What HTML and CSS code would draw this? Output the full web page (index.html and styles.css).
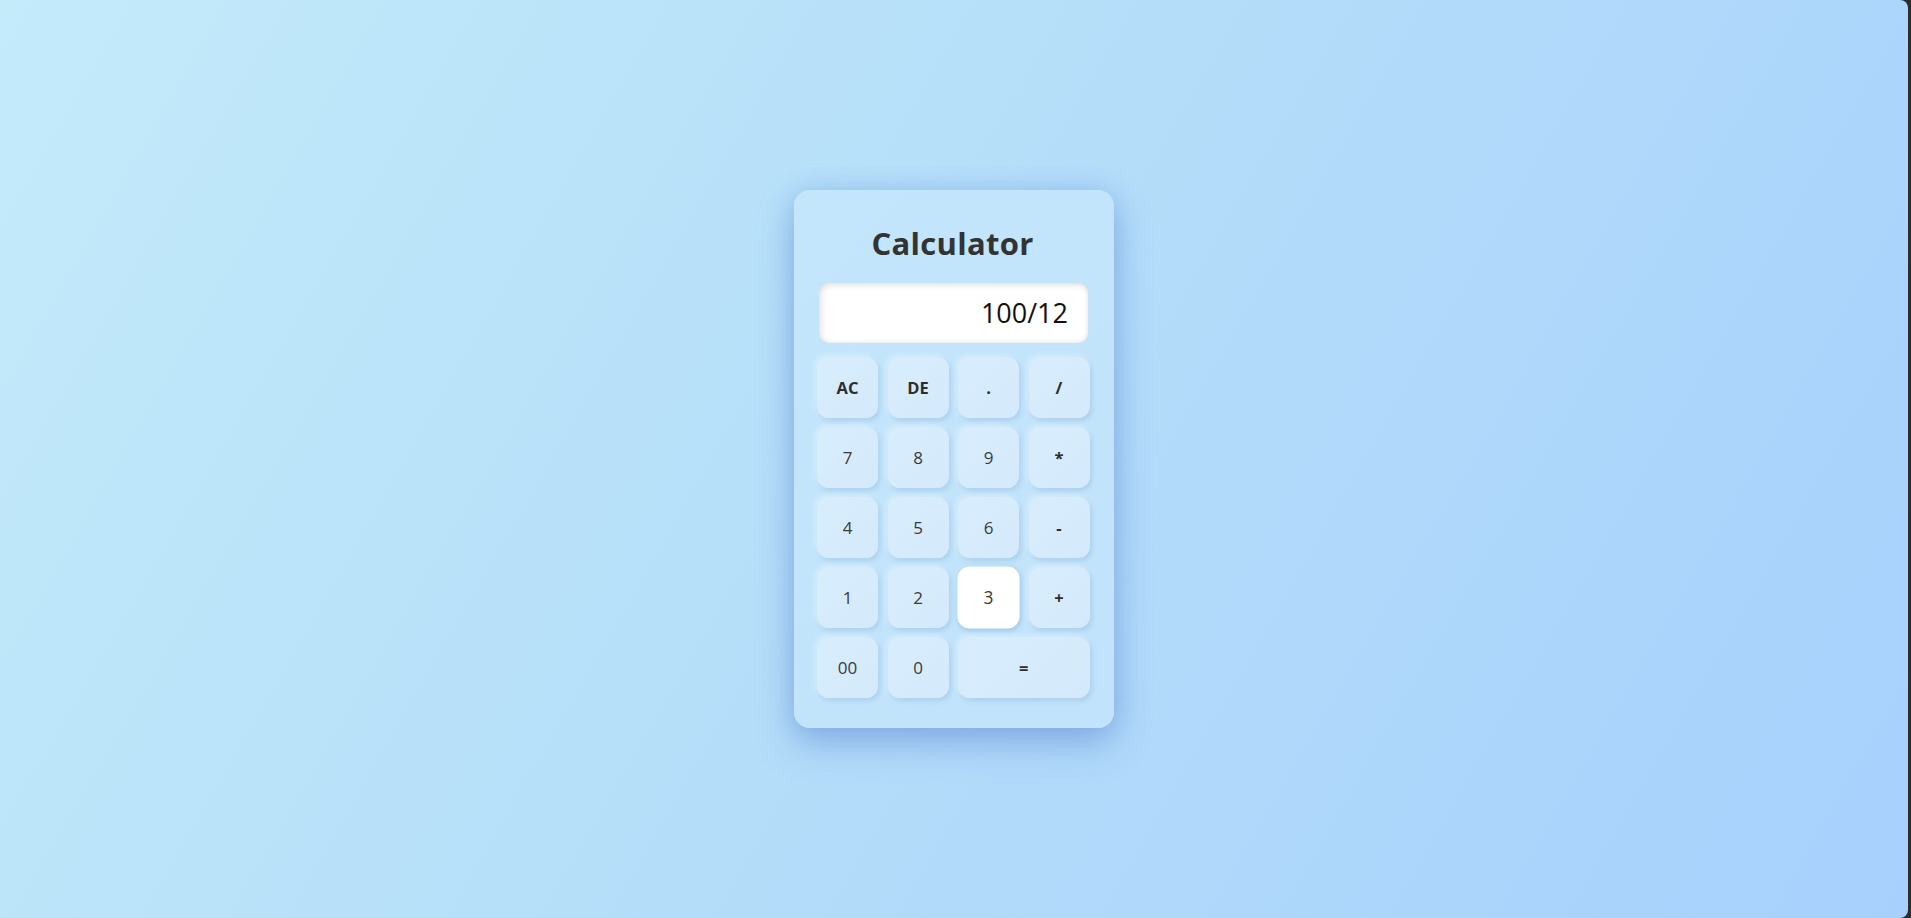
FILE: index.html
```html
<!DOCTYPE html>
<html lang="en">
<head>
<meta charset="utf-8">
<title>Calculator</title>
<link rel="stylesheet" href="styles.css">
</head>
<body>
<div class="page">
  <div class="calculator">
    <h1 class="title">Calculator</h1>
    <div class="display">100/12</div>
    <div class="keys">
      <button class="key op">AC</button>
      <button class="key op">DE</button>
      <button class="key op">.</button>
      <button class="key op">/</button>
      <button class="key">7</button>
      <button class="key">8</button>
      <button class="key">9</button>
      <button class="key op">*</button>
      <button class="key">4</button>
      <button class="key">5</button>
      <button class="key">6</button>
      <button class="key op">-</button>
      <button class="key">1</button>
      <button class="key">2</button>
      <button class="key hover">3</button>
      <button class="key op">+</button>
      <button class="key">00</button>
      <button class="key">0</button>
      <button class="key op wide">=</button>
    </div>
  </div>
</div>
</body>
</html>
```

FILE: styles.css
```css
html {
  margin: 0;
  height: 100%;
  background: #2d2d2d;
}
body {
  margin: 0;
  height: 100%;
  font-family: "Open Sans", "Noto Sans", sans-serif;
}
.page {
  width: calc(100% - 3px);
  height: 918px;
  border-radius: 0 8px 8px 0;
  background: linear-gradient(120deg, #c3ebfa 0%, #b5def9 45%, #a7d0fd 100%);
  display: flex;
  align-items: flex-start;
  justify-content: center;
  padding-top: 190px;
  box-sizing: border-box;
}
.calculator {
  width: 320px;
  height: 538px;
  box-sizing: border-box;
  background: linear-gradient(135deg, #c4e6fb 0%, #c1e3fb 100%);
  border-radius: 16px;
  box-shadow: 0 16px 36px rgba(70, 110, 200, 0.38), 0 0 24px rgba(80, 130, 210, 0.2);
  padding: 0 26px 0 23px;
  display: flex;
  flex-direction: column;
  align-items: stretch;
}
.title {
  margin: 33px 0 0;
  text-align: center;
  font-size: 31px;
  font-weight: 700;
  color: #333;
  line-height: 40px;
  letter-spacing: 0.3px;
}
.display {
  margin: 20px 0 0 2px;
  height: 60px;
  background: #fff;
  border-radius: 10px;
  box-shadow: inset 2px 2px 6px rgba(0, 0, 0, 0.12), inset -1px -1px 4px rgba(0, 0, 0, 0.05);
  font-size: 27px;
  color: #111;
  text-align: right;
  padding-right: 20px;
  line-height: 60px;
  box-sizing: border-box;
}
.keys {
  margin-top: 14px;
  display: grid;
  grid-template-columns: repeat(4, 61px);
  grid-auto-rows: 61px;
  gap: 9px 9.5px;
}
.key {
  border: none;
  border-radius: 12px;
  background: linear-gradient(135deg, #d8edfc 0%, #d4eafc 100%);
  box-shadow: 2px 3px 5px rgba(90, 140, 190, 0.22), -2px -2px 5px rgba(255, 255, 255, 0.35);
  font-family: "Open Sans", "Noto Sans", sans-serif;
  font-size: 17px;
  font-weight: 400;
  color: #3a3a3a;
  padding: 0;
  cursor: pointer;
}
.key.op {
  font-size: 16.5px;
  font-weight: 700;
  color: #2e2e2e;
}
.key.wide {
  grid-column: span 2;
}
.key.hover {
  background: #fff;
  transform: scale(1.02);
  box-shadow: 1px 2px 4px rgba(90, 140, 190, 0.3);
}
```
